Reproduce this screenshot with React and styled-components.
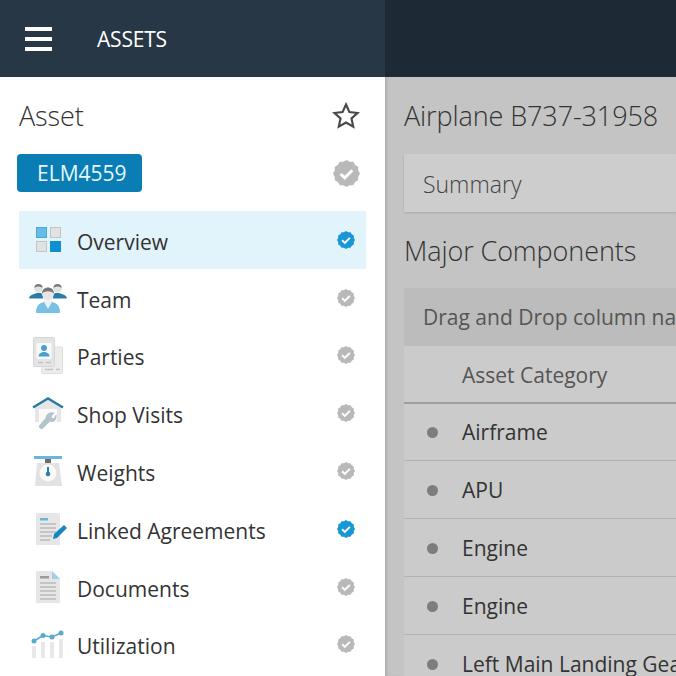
import React from "react";
import styled, { createGlobalStyle } from "styled-components";

const GlobalStyle = createGlobalStyle`
    html, body {
        margin: 0;
        padding: 0;
        width: 676px;
        height: 676px;
        overflow: hidden;
        background: #c4c4c4;
        font-family: "Open Sans", "Liberation Sans", sans-serif;
    }
`;

const Page = styled.div`
    display: grid;
    grid-template-columns: 385px 291px;
    width: 676px;
    height: 676px;
    overflow: hidden;
`;

const Sidebar = styled.aside`
    display: flex;
    flex-direction: column;
    height: 676px;
    overflow: hidden;
    background: #fff;
`;

const TopBar = styled.header`
    display: flex;
    align-items: center;
    flex: none;
    height: 77px;
    padding-left: 25px;
    box-sizing: border-box;
    background: #273746;
`;

const TopBarDark = styled.div`
    flex: none;
    height: 77px;
    background: #1d2a36;
`;

const Burger = styled.div`
    display: flex;
    flex-direction: column;
    gap: 6px;
    width: 27px;
    margin-right: 45px;
`;

const BurgerLine = styled.span`
    height: 4px;
    background: #fff;
`;

const TopTitle = styled.div`
    color: #fff;
    font-size: 21px;
    line-height: 26px;
    letter-spacing: -0.2px;
`;

const AssetHead = styled.div`
    display: flex;
    align-items: center;
    justify-content: space-between;
    flex: none;
    height: 34px;
    margin-top: 22px;
    padding: 0 25px 0 19px;
`;

const AssetTitle = styled.h2`
    margin: 0;
    color: #333;
    font-size: 27px;
    font-weight: 300;
    line-height: 34px;
    letter-spacing: -0.1px;
`;

const BadgeRow = styled.div`
    display: flex;
    align-items: center;
    justify-content: space-between;
    flex: none;
    margin-top: 21px;
    padding: 0 25px 0 17px;
`;

const Badge = styled.div`
    box-sizing: border-box;
    width: 125px;
    height: 38px;
    padding-left: 20px;
    border-radius: 4px;
    background: #0a7db4;
    color: #e6f7ff;
    font-size: 21px;
    line-height: 39px;
`;

const NavList = styled.nav`
    display: flex;
    flex-direction: column;
    flex: none;
    margin: 19px 19px 0;
`;

const NavRow = styled.div`
    display: flex;
    align-items: center;
    flex: none;
    height: 57.8px;
    padding-right: 11px;
    background: ${(p) => (p.$active ? "#e1f3fb" : "transparent")};
`;

const NavIcon = styled.div`
    display: flex;
    align-items: center;
    justify-content: center;
    flex: none;
    width: 58px;
`;

const NavLabel = styled.span`
    flex: 1;
    padding-top: 4px;
    color: #333;
    font-size: 21px;
    line-height: 28px;
`;

const Main = styled.main`
    display: flex;
    flex-direction: column;
    height: 676px;
    overflow: hidden;
    background: #c4c4c4;
    box-shadow: inset 3px 0 3px -1px #adadad;
`;

const PageTitle = styled.h1`
    margin: 20px 0 0 19px;
    color: #333;
    font-size: 27px;
    font-weight: 300;
    line-height: 38px;
    letter-spacing: -0.1px;
    white-space: nowrap;
`;

const SummaryBar = styled.div`
    flex: none;
    height: 58px;
    margin: 19px 0 0 19px;
    padding-left: 19px;
    background: #cdcdcd;
    box-shadow: 0 1px 2px #a8a8a8;
    color: #444;
    font-size: 23px;
    font-weight: 300;
    line-height: 60px;
`;

const SectionTitle = styled.h2`
    margin: 20px 0 0 19px;
    color: #333;
    font-size: 27px;
    font-weight: 300;
    line-height: 38px;
    letter-spacing: -0.1px;
    white-space: nowrap;
`;

const Table = styled.div`
    flex: none;
    margin: 18px 0 0 19px;
    background: #cbcbcb;
    white-space: nowrap;
    overflow: hidden;
`;

const DropHint = styled.div`
    height: 58px;
    padding-left: 19px;
    background: #bcbcbc;
    color: #555;
    font-size: 21px;
    line-height: 58px;
`;

const HeadRow = styled.div`
    height: 56px;
    padding-left: 58px;
    background: #cbcbcb;
    border-bottom: 2px solid #9f9f9f;
    color: #555;
    font-size: 21px;
    line-height: 58px;
`;

const Row = styled.div`
    display: flex;
    align-items: center;
    height: 57px;
    margin-top: ${(p) => (p.$first ? "-1px" : "0")};
    border-bottom: 1px solid #b2b2b2;
    color: #333;
    font-size: 21px;
`;

const Dot = styled.span`
    flex: none;
    width: 11px;
    height: 11px;
    margin: 2px 24px 0 23px;
    border-radius: 50%;
    background: #7d7d7d;
`;

const Seal = ({ size, color, tick }) => {
    const points = [];
    for (let i = 0; i < 24; i++) {
        const r = i % 2 === 0 ? 12 : 10.8;
        const a = (i * Math.PI) / 12;
        points.push(`${12 + r * Math.sin(a)},${12 - r * Math.cos(a)}`);
    }
    return (
        <svg width={size} height={size} viewBox="0 0 24 24">
            <polygon points={points.join(" ")} fill={color} />
            <path d="M6.8 12.4l3.6 3.5 6.8-6.8" fill="none" stroke={tick} strokeWidth="2.6" />
        </svg>
    );
};

const OverviewIcon = () => (
    <svg width="25" height="25" viewBox="0 0 25 25">
        <rect x="0.5" y="0.5" width="10" height="10" fill="#63bde8" stroke="#4ba7d6" />
        <rect x="14.5" y="0.5" width="10" height="10" fill="#e2e2e2" stroke="#c4c4c4" />
        <rect x="0.5" y="14.5" width="10" height="10" fill="#e2e2e2" stroke="#c4c4c4" />
        <rect x="14" y="14" width="11" height="11" fill="#0d8fd0" />
    </svg>
);

const TeamIcon = () => (
    <svg width="38" height="30" viewBox="0 0 38 30">
        <path d="M0 15c1-3 5-4 8-5h4l2 2v3.500H1z" fill="#2a7ba6" />
        <path d="M38 15c-1-3-5-4-8-5h-4l-2 2v3.500h13z" fill="#2a7ba6" />
        <circle cx="9.500" cy="5.500" r="4.300" fill="#e2e2e2" />
        <circle cx="28.500" cy="5.500" r="4.300" fill="#e2e2e2" />
        <path d="M5.300 5c0-5.500 8.400-5.500 8.400 0-2.500-2-6-2-8.400 0z" fill="#777" />
        <path d="M24.300 5c0-5.500 8.400-5.500 8.400 0-2.500-2-6-2-8.400 0z" fill="#777" />
        <path d="M7 30c0-7 3-10 8-11h8c5 1 8 4 8 11z" fill="#78c0e4" />
        <path d="M14.500 18l4.500 8 4.500-8-1-2h-7z" fill="#f1f1f1" />
        <circle cx="19" cy="11" r="6" fill="#e6e6e6" />
        <path d="M13 10.500c0-8 12-8 12 0-3-3-9-3-12 0z" fill="#777" />
    </svg>
);

const PartiesIcon = () => (
    <svg width="30" height="37" viewBox="0 0 30 37">
        <rect x="8.500" y="10" width="21" height="26.500" rx="1" fill="#ececec" stroke="#dedede" />
        <rect x="0.500" y="0.500" width="21" height="29" rx="1" fill="#e4e4e4" stroke="#d6d6d6" />
        <rect x="3.500" y="6" width="15" height="16" fill="#f8f8f8" />
        <circle cx="11" cy="11" r="3" fill="#4a9fcc" />
        <path d="M5.500 19.500c0-3 3-4.500 5.500-4.500s5.500 1.500 5.500 4.500z" fill="#4a9fcc" />
        <path d="M5 25.500h5M13 25.500h5M12 32.500h8M23 32.500h4" stroke="#c4c4c4" strokeWidth="1.500" />
    </svg>
);

const ShopIcon = () => (
    <svg width="32" height="34" viewBox="0 0 32 34">
        <path d="M3 11L16 4l13 7v15H3z" fill="#e6e6e6" />
        <rect x="7" y="13" width="18" height="14" fill="#fafafa" />
        <path d="M1 11.500L16 2.500l15 9" fill="none" stroke="#2a7aa6" strokeWidth="2.400" />
        <path d="M14 22c0-4 4-6 8-5l-3 3 1 3 3-1 1-3c1 4-2 8-6 6l-7 7c-2 2-5-1-3-3z" fill="#b5c4cc" stroke="#98aab4" strokeWidth=".5" />
    </svg>
);

const WeightsIcon = () => (
    <svg width="28" height="30" viewBox="0 0 28 30">
        <rect x="0" y="0" width="28" height="3" fill="#6ab5d9" />
        <rect x="11" y="3" width="6" height="4" fill="#6d6d6d" />
        <path d="M3 7h22l3 23H1z" fill="#e2e2e2" />
        <circle cx="14" cy="17" r="8.500" fill="#f9f9f9" />
        <rect x="13" y="11" width="2" height="6" fill="#2a7fae" />
        <circle cx="14" cy="18" r="2.300" fill="#2a7fae" />
    </svg>
);

const AgreementIcon = () => (
    <svg width="38" height="32" viewBox="-7 0 38 32">
        <rect x="0" y="0" width="24" height="32" fill="#e6e6e6" />
        <rect x="4" y="5" width="8" height="2.500" fill="#6ab5d9" />
        <path d="M4 11h16M4 15h16M4 19h16M4 23h12M4 27h10" stroke="#bbb" strokeWidth="1.400" />
        <path d="M18 21L28 12l3 3-10 10-4 1z" fill="#1786bf" />
    </svg>
);

const DocumentIcon = () => (
    <svg width="24" height="32" viewBox="0 0 24 32">
        <path d="M0 0h16l8 8v24H0z" fill="#e6e6e6" />
        <path d="M16 0l8 8h-8z" fill="#9fcfe6" />
        <rect x="4" y="5" width="9" height="2.500" fill="#9a9a9a" />
        <path d="M4 12h16M4 16h16M4 20h16M4 24h16M4 28h16" stroke="#bbb" strokeWidth="1.400" />
    </svg>
);

const UtilizationIcon = () => (
    <svg width="34" height="28" viewBox="0 0 34 28">
        <path d="M1 16h4v12H1zM10 12h4v16h-4zM19 12h4v16h-4zM28 9h4v19h-4z" fill="#e8e8e8" />
        <path d="M3 11L12 5.500l9 1.500 9-4" fill="none" stroke="#5aa9d0" strokeWidth="1.600" />
        <circle cx="3" cy="11" r="2.500" fill="#5aa9d0" />
        <circle cx="12" cy="5.500" r="2.500" fill="#5aa9d0" />
        <circle cx="21" cy="7" r="2.500" fill="#5aa9d0" />
        <circle cx="30" cy="3" r="2.500" fill="#5aa9d0" />
    </svg>
);

const navItems = [
    { label: "Overview", icon: <OverviewIcon />, active: true, done: true },
    { label: "Team", icon: <TeamIcon /> },
    { label: "Parties", icon: <PartiesIcon /> },
    { label: "Shop Visits", icon: <ShopIcon /> },
    { label: "Weights", icon: <WeightsIcon /> },
    { label: "Linked Agreements", icon: <AgreementIcon />, done: true },
    { label: "Documents", icon: <DocumentIcon /> },
    { label: "Utilization", icon: <UtilizationIcon /> },
];

const components = ["Airframe", "APU", "Engine", "Engine", "Left Main Landing Gear"];

const App = () => (
    <Page>
        <GlobalStyle />
        <Sidebar>
            <TopBar>
                <Burger>
                    <BurgerLine />
                    <BurgerLine />
                    <BurgerLine />
                </Burger>
                <TopTitle>ASSETS</TopTitle>
            </TopBar>
            <AssetHead>
                <AssetTitle>Asset</AssetTitle>
                <svg width="28" height="28" viewBox="0 0 28 28">
                    <path
                        d="M14 2.500l3.400 7.600 8.100.9-6 5.500 1.700 8.100-7.200-4.100-7.200 4.100 1.700-8.100-6-5.500 8.100-.9z"
                        fill="none"
                        stroke="#4a4a4a"
                        strokeWidth="2.200"
                    />
                </svg>
            </AssetHead>
            <BadgeRow>
                <Badge>ELM4559</Badge>
                <Seal size={27} color="#b9b9b9" tick="#fff" />
            </BadgeRow>
            <NavList>
                {navItems.map((item) => (
                    <NavRow key={item.label} $active={item.active}>
                        <NavIcon>{item.icon}</NavIcon>
                        <NavLabel>{item.label}</NavLabel>
                        <Seal size={18} color={item.done ? "#1797d6" : "#b9b9b9"} tick="#fff" />
                    </NavRow>
                ))}
            </NavList>
        </Sidebar>
        <Main>
            <TopBarDark />
            <PageTitle>Airplane B737-31958</PageTitle>
            <SummaryBar>Summary</SummaryBar>
            <SectionTitle>Major Components</SectionTitle>
            <Table>
                <DropHint>Drag and Drop column name here</DropHint>
                <HeadRow>Asset Category</HeadRow>
                {components.map((name, i) => (
                    <Row key={i} $first={i === 0}>
                        <Dot />
                        {name}
                    </Row>
                ))}
            </Table>
        </Main>
    </Page>
);

export default App;
